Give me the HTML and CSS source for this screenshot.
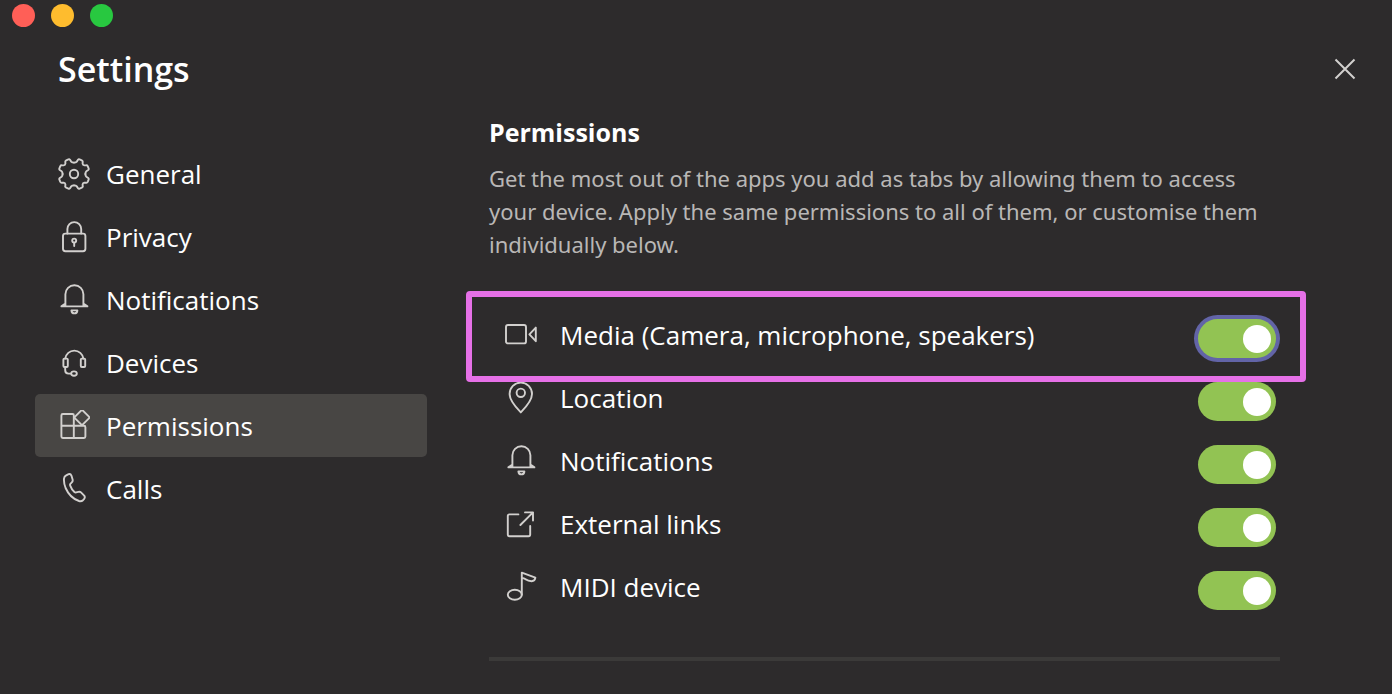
FILE: index.html
```
<!DOCTYPE html>
<html lang="en">
<head>
    <meta charset="UTF-8">
    <meta name="viewport" content="width=device-width, initial-scale=1.0">
    <title>Settings</title>
    <link rel="stylesheet" href="styles.css">
</head>
<body>
    <svg class="sprite" aria-hidden="true">
        <symbol id="gear" viewBox="0 0 32 32">
            <path id="tooth" d="M16 4.6Q18 4.6 18.8 3.6L20 1.8Q20.6 1 21.6 1.4L23.8 2.3Q24.8 2.8 24.7 3.8L24.6 5.6Q24.8 7.2 26.4 7.4L28.2 7.3Q29.2 7.2 29.7 8.2L30.6 10.4Q31 11.4 30.2 12L28.4 13.2Q27.4 14 27.4 16"/>
            <use href="#tooth" transform="rotate(90 16 16)"/>
            <use href="#tooth" transform="rotate(180 16 16)"/>
            <use href="#tooth" transform="rotate(270 16 16)"/>
            <circle cx="16" cy="16" r="4.2"/>
        </symbol>
        <symbol id="lock" viewBox="0 0 32 32">
            <rect x="5" y="12.6" width="22.4" height="17.6" rx="2.4"/>
            <path d="M9.4 12.6V8a6.9 6.9 0 0 1 13.8 0v4.6M16.2 21.6V25"/>
            <circle cx="16.2" cy="19.6" r="2"/>
        </symbol>
        <symbol id="bell" viewBox="0 0 32 32">
            <path d="M7.4 21.4V10.2a9 9 0 0 1 18 0v11.2M7.4 19.6L3.4 22.4H29.4L25.4 19.6M13.4 26.4h6Q19.2 29.4 16.4 29.4T13.4 26.4z"/>
        </symbol>
        <symbol id="headset" viewBox="0 0 32 32">
            <rect x="5.4" y="11.6" width="4.4" height="8.4" rx="1"/>
            <rect x="22.8" y="11.6" width="4.4" height="8.4" rx="1"/>
            <path d="M7.2 11.6A9.2 9.4 0 0 1 25.4 11.6M7.2 20v3.2Q7.2 26.6 10.6 26.6H13"/>
            <ellipse cx="16" cy="26.6" rx="2.8" ry="2.2"/>
        </symbol>
        <symbol id="apps" viewBox="0 0 32 32">
            <path d="M15.8 15.8V5.2Q15.8 4 14.6 4H4.8Q3.4 4 3.4 5.4V26.6Q3.4 28 4.8 28H26Q27.4 28 27.4 26.6V17.2Q27.4 15.8 26 15.8H3.4M15.8 15.8V28"/>
            <rect x="18.5" y="2" width="11" height="11" rx="1.2" transform="rotate(45 24 7.5)"/>
        </symbol>
        <symbol id="phone" viewBox="0 0 32 32">
            <path d="M8.2 2.4L10.6 1.2Q12.6 .6 13.4 2.6L14.6 6.6Q15 8.2 13.8 9.4L12.4 10.8Q11.8 11.6 12.2 12.6Q13.6 16.4 16.4 19Q17.2 19.6 18.2 19.4L20.4 18.8Q22 18.4 23 19.4L26.2 22.6Q27.4 24.2 26.2 25.8L25 27.2Q23.4 28.6 21 28Q12 25 7.6 15Q5.6 9.6 6 5.6Q6.2 3.4 8.2 2.4z"/>
        </symbol>
        <symbol id="camera" viewBox="0 0 32 32">
            <rect x="1" y="6" width="20" height="18.4" rx="2"/>
            <path d="M24.4 15.4L30.8 8.6V22.2z"/>
        </symbol>
        <symbol id="pin" viewBox="0 0 32 32">
            <path d="M15.8 30.4Q4.6 19 4.6 12a11.2 11.4 0 0 1 22.4 0Q27 19 15.8 30.4z"/>
            <circle cx="15.8" cy="10.8" r="4.2"/>
        </symbol>
        <symbol id="link" viewBox="0 0 32 32">
            <path d="M13.4 6.4H4.4Q2.8 6.4 2.8 8V26.6Q2.8 28.2 4.4 28.2H23.6Q25.2 28.2 25.2 26.6V18M20 4.4H28V12.6M28 4.4L15.4 17"/>
        </symbol>
        <symbol id="note" viewBox="0 0 32 32">
            <ellipse cx="9.8" cy="23.8" rx="7" ry="5"/>
            <path d="M16.8 23.8V1.6L30.4 6.6Q30 10 26.6 10.2Q23 10.2 21 8.6T16.8 7"/>
        </symbol>
    </svg>

    <div class="titlebar">
        <button class="dot red" aria-label="Close window"></button>
        <button class="dot yellow" aria-label="Minimise"></button>
        <button class="dot green" aria-label="Zoom"></button>
    </div>

    <header class="header">
        <h1>Settings</h1>
        <button class="close" aria-label="Close">
            <svg width="22" height="22" viewBox="0 0 22 22"><path d="M1.5 1.5L20.5 20.5M20.5 1.5L1.5 20.5"/></svg>
        </button>
    </header>

    <div class="layout">
        <nav class="sidebar">
            <a href="#general"><svg class="icon"><use href="#gear"/></svg>General</a>
            <a href="#privacy"><svg class="icon"><use href="#lock"/></svg>Privacy</a>
            <a href="#notifications"><svg class="icon"><use href="#bell"/></svg>Notifications</a>
            <a href="#devices"><svg class="icon"><use href="#headset"/></svg>Devices</a>
            <a href="#permissions" class="active" aria-current="page"><svg class="icon"><use href="#apps"/></svg>Permissions</a>
            <a href="#calls"><svg class="icon"><use href="#phone"/></svg>Calls</a>
        </nav>

        <main class="content">
            <h2>Permissions</h2>
            <p>Get the most out of the apps you add as tabs by allowing them to access your device. Apply the same permissions to all of them, or customise them individually below.</p>

            <div class="options">
                <div class="option highlight">
                    <svg class="icon"><use href="#camera"/></svg>
                    <label for="media">Media (Camera, microphone, speakers)</label>
                    <input type="checkbox" role="switch" id="media" class="toggle focused" checked>
                </div>
                <div class="option">
                    <svg class="icon"><use href="#pin"/></svg>
                    <label for="location">Location</label>
                    <input type="checkbox" role="switch" id="location" class="toggle" checked>
                </div>
                <div class="option">
                    <svg class="icon"><use href="#bell"/></svg>
                    <label for="notify">Notifications</label>
                    <input type="checkbox" role="switch" id="notify" class="toggle" checked>
                </div>
                <div class="option">
                    <svg class="icon"><use href="#link"/></svg>
                    <label for="external">External links</label>
                    <input type="checkbox" role="switch" id="external" class="toggle" checked>
                </div>
                <div class="option">
                    <svg class="icon"><use href="#note"/></svg>
                    <label for="midi">MIDI device</label>
                    <input type="checkbox" role="switch" id="midi" class="toggle" checked>
                </div>
            </div>
        </main>
    </div>
</body>
</html>
```
FILE: styles.css
```
* {
    box-sizing: border-box;
}
body {
    margin: 0;
    background-color: #2d2b2c;
    color: #fff;
    font-family: "Open Sans", "Noto Sans", sans-serif;
    font-size: 26px;
}
h1, h2, p {
    margin: 0;
}
button {
    padding: 0;
    border: none;
    background: none;
    cursor: pointer;
}
.sprite {
    position: absolute;
    width: 0;
    height: 0;
}
.icon {
    width: 32px;
    height: 32px;
    flex: none;
    fill: none;
    stroke: #d2d0ce;
    stroke-width: 1.9;
    stroke-linecap: round;
    stroke-linejoin: round;
}

/* Window buttons */
.titlebar {
    display: flex;
    gap: 16px;
    padding: 4px 12px;
}
.dot {
    width: 23px;
    height: 23px;
    border-radius: 50%;
}
.red {
    background-color: #ff5f57;
}
.yellow {
    background-color: #febc2e;
}
.green {
    background-color: #28c840;
}

.header {
    display: flex;
    align-items: center;
    justify-content: space-between;
    height: 76px;
    padding: 0 36px 0 58px;
}
h1 {
    font-size: 34px;
    font-weight: 600;
    line-height: 48px;
}
.close {
    width: 22px;
    height: 22px;
}
.close svg {
    display: block;
    fill: none;
    stroke: #d2d0ce;
    stroke-width: 2;
}

.layout {
    display: grid;
    grid-template-columns: 392px 1fr;
    gap: 62px;
    padding: 0 112px 32px 35px;
}
.sidebar {
    padding-top: 35px;
}
.sidebar a {
    display: flex;
    align-items: center;
    gap: 16px;
    height: 63px;
    padding-left: 23px;
    border-radius: 5px;
    color: #fff;
    text-decoration: none;
}
.sidebar .active {
    background-color: #484644;
}

h2 {
    padding-top: 8px;
    font-size: 25px;
    font-weight: 700;
    line-height: 34px;
}
p {
    padding-top: 13px;
    color: #b9b7b6;
    font-family: "Noto Sans", "Open Sans", sans-serif;
    font-size: 22px;
    line-height: 33px;
}
.options {
    padding: 42px 0 39px;
    border-bottom: 4px solid #3b3a39;
}
.option {
    position: relative;
    display: flex;
    align-items: center;
    gap: 23px;
    height: 63px;
    padding: 0 4px 0 16px;
}
.option label {
    flex: 1;
}

/* Frame around the media row */
.highlight::after {
    content: "";
    position: absolute;
    inset: -12px -26px -16px -23px;
    border: 6px solid #e570e7;
    border-radius: 4px;
    pointer-events: none;
}

.toggle {
    appearance: none;
    display: flex;
    align-items: center;
    width: 78px;
    height: 39px;
    margin: 8px 0 0;
    padding: 0 5px;
    border-radius: 20px;
    background-color: #605e5c;
    cursor: pointer;
}
.toggle::before {
    content: "";
    width: 28px;
    height: 28px;
    border-radius: 50%;
    background-color: #fff;
}
.toggle:checked {
    justify-content: flex-end;
    background-color: #92c353;
}
.focused {
    box-shadow: 0 0 0 4px #6264a7;
}
```
